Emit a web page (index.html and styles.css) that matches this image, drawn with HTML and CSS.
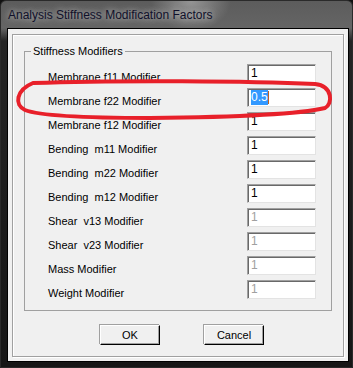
FILE: index.html
```html
<!DOCTYPE html>
<html lang="en">
<head>
    <meta charset="UTF-8">
    <meta name="viewport" content="width=device-width, initial-scale=1.0">
    <title>Analysis Stiffness Modification Factors</title>
    <link rel="stylesheet" href="styles.css">
</head>
<body>

<div class="window">
    <div class="titlebar">
        <span class="title">Analysis Stiffness Modification Factors</span>
    </div>

    <div class="client">
        <div class="panel">
            <fieldset class="group">
                <legend>Stiffness Modifiers</legend>

                <div class="row"><span class="label">Membrane f11 Modifier</span><span class="field">1</span></div>
                <div class="row"><span class="label">Membrane f22 Modifier</span><span class="field"><span class="selected">0.5</span><span class="caret"></span></span></div>
                <div class="row"><span class="label">Membrane f12 Modifier</span><span class="field">1</span></div>
                <div class="row"><span class="label">Bending  m11 Modifier</span><span class="field">1</span></div>
                <div class="row"><span class="label">Bending  m22 Modifier</span><span class="field">1</span></div>
                <div class="row"><span class="label">Bending  m12 Modifier</span><span class="field">1</span></div>
                <div class="row"><span class="label">Shear  v13 Modifier</span><span class="field disabled">1</span></div>
                <div class="row"><span class="label">Shear  v23 Modifier</span><span class="field disabled">1</span></div>
                <div class="row"><span class="label">Mass Modifier</span><span class="field disabled">1</span></div>
                <div class="row"><span class="label">Weight Modifier</span><span class="field disabled">1</span></div>
            </fieldset>

            <div class="buttons">
                <button type="button" class="btn">OK</button>
                <button type="button" class="btn">Cancel</button>
            </div>
        </div>
    </div>

    <!-- red marker drawn over the f22 row -->
    <svg class="mark" width="353" height="368" viewBox="0 0 353 368">
        <path d="M33 83 C120 80 250 81 315 84 C333 86 333 104 325 108 C300 114 250 117 150 118 C80 118 40 116 25 110 C14 105 16 90 33 83 Z"
              fill="none" stroke="#e8202a" stroke-width="4" stroke-linejoin="round"/>
    </svg>
</div>

</body>
</html>
```

FILE: styles.css
```css
body {
    margin: 0;
    padding: 0;
    background: #111;
    font-family: "Liberation Sans", Arial, sans-serif;
}

.window {
    position: relative;
    width: 353px;
    height: 368px;
    box-sizing: border-box;
    border: 1px solid #2a2a2a;
    border-radius: 6px 6px 0 0;
    background:
        radial-gradient(ellipse 40px 30px at 190px 0, rgba(255, 255, 255, 0.35), transparent),
        linear-gradient(to bottom, #5c5c5c 0, #656565 27px, #242424 40px, #161616 100%);
    overflow: hidden;
}

.titlebar {
    height: 27px;
    padding-left: 7px;
    line-height: 25px;
}

.title {
    font-size: 12px;
    color: #10102a;
    text-shadow: 0 0 6px rgba(255, 255, 255, 0.55), 0 0 10px rgba(255, 255, 255, 0.35);
}

.client {
    box-sizing: border-box;
    height: 334px;
    margin: 0 3px 0 6px;
    padding: 5px 4px 4px 4px;
    border: 1px solid #000;
    background-color: #f0f0f0;
}

.panel {
    box-sizing: border-box;
    height: 100%;
    padding: 10px 11px 0 11px;
    border: 1px solid #a0a0a0;
    box-shadow: 1px 1px 0 #fff, inset 1px 1px 0 #fff;
}

.group {
    margin: 0;
    padding: 6px 15px 11px 8px;
    border: 1px solid #a0a0a0;
    display: flex;
    flex-direction: column;
    gap: 5px;
}

.group legend {
    padding: 0 2px;
    margin-left: -2px;
    font-size: 11px;
    line-height: 13px;
    color: #000;
}

.row {
    display: flex;
    justify-content: space-between;
    align-items: center;
    height: 19px;
    padding-left: 15px;
}

.label {
    font-size: 11px;
    white-space: pre;
    color: #000;
    padding-top: 6px;
}

.field {
    box-sizing: border-box;
    width: 69px;
    height: 19px;
    padding: 1px 0 0 3px;
    border: 1px solid;
    border-color: #a0a0a0 #e3e3e3 #e3e3e3 #a0a0a0;
    box-shadow: inset 1px 1px 0 #696969;
    background-color: #fff;
    font-size: 12px;
    line-height: 15px;
    color: #000;
}

.field.disabled {
    color: #a0a0a0;
}

.selected {
    display: inline-block;
    background-color: #3399ff;
    color: #fff;
}

.caret {
    display: inline-block;
    width: 1px;
    height: 13px;
    vertical-align: top;
    margin-top: 1px;
    background-color: #c06020;
}

.buttons {
    display: flex;
    gap: 44px;
    margin-top: 14px;
    padding-left: 76px;
}

.btn {
    box-sizing: border-box;
    width: 60px;
    height: 20px;
    padding: 0;
    border: 1px solid;
    border-color: #fff #000 #000 #fff;
    box-shadow: inset -1px -1px 0 #a0a0a0, -1px -1px 0 #a0a0a0;
    background-color: #f0f0f0;
    font-family: "Liberation Sans", Arial, sans-serif;
    font-size: 11px;
    color: #000;
}

.mark {
    position: absolute;
    left: -1px;
    top: -1px;
    pointer-events: none;
}
```
